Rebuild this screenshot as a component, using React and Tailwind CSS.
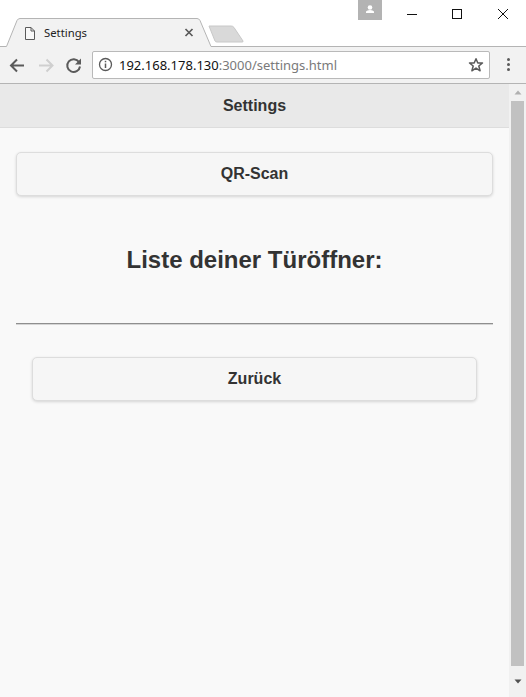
import React from "react";

function TabStrip() {
  return (
    <div className="relative h-[47px] bg-white shrink-0 overflow-hidden">
      <svg className="absolute left-0 top-0" width="526" height="47" viewBox="0 0 526 47" fill="none">
        <path d="M0 46.5H6.5L17 20.5Q18 18.5 20 18.5H197Q199 18.5 200 20.5L211 46.5H526V47H0Z" fill="#f2f2f2" />
        <path d="M0 46.5H6.5L17 20.5Q18 18.5 20 18.5H197Q199 18.5 200 20.5L211 46.5H526" stroke="#b4b4b4" strokeWidth="1" />
        <path d="M209 26H231Q233 26 234 27.5L243 41Q243.5 42 242 42H217Q215.5 42 215 41L209 26Z" fill="#d9d9d9" stroke="#c8c8c8" strokeWidth="1" />
        <path d="M25.5 27.5H31L34.5 31V39.5H25.5Z M31 27.5V31H34.5" stroke="#5a5a5a" strokeWidth="1" fill="#f8f8f8" />
        <path d="M185.5 29L192.5 36M192.5 29L185.5 36" stroke="#5a5a5a" strokeWidth="1.7" />
      </svg>
      <span className="absolute left-[44px] top-[24px] text-[11.3px] leading-[17px] text-[#222] font-['Noto_Sans',sans-serif]">Settings</span>
      <div className="absolute left-[358px] top-0 w-[24px] h-[20px] bg-[#b3b3b3]">
        <svg width="24" height="20" viewBox="0 0 24 20">
          <circle cx="12" cy="7.5" r="2.3" fill="#fff" />
          <path d="M8 13V11.5Q9 10 12 10Q15 10 16 11.5V13Z" fill="#fff" />
        </svg>
      </div>
      <svg className="absolute left-[400px] top-0" width="126" height="28" viewBox="0 0 126 28" fill="none" stroke="#111" strokeWidth="1">
        <path d="M7 14.5H17" />
        <rect x="52.5" y="9.5" width="9" height="9" />
        <path d="M98 9L108 19M108 9L98 19" />
      </svg>
    </div>
  );
}

function Toolbar() {
  return (
    <div className="h-[37px] shrink-0 bg-[#f2f2f2] border-b border-[#b4b4b4] flex items-center pb-[1px]">
      <div className="w-[92px] shrink-0 h-full relative">
        <svg width="92" height="36" viewBox="0 0 92 36" fill="none" strokeWidth="2">
          <path d="M24 18.5H11.5M17 12.5L11 18.5L17 24.5" stroke="#5a5a5a" />
          <path d="M39 18.5H52M46.5 12.5L52.5 18.5L46.5 24.5" stroke="#cfcfcf" />
          <path d="M79 15A6.4 6.4 0 1 0 80 19.5" stroke="#5a5a5a" />
          <path d="M81 11.5V17.5H75Z" fill="#5a5a5a" />
        </svg>
      </div>
      <div className="w-[398px] h-[28px] shrink-0 bg-white border border-[#b9b9b9] rounded-[2px] flex items-center">
        <svg className="ml-[5px] shrink-0" width="15" height="15" viewBox="0 0 15 15" fill="none">
          <circle cx="7.5" cy="7.5" r="6" stroke="#5a5a5a" strokeWidth="1.3" />
          <path d="M7.5 6.5V11" stroke="#5a5a5a" strokeWidth="1.5" />
          <path d="M7.5 3.8V5.3" stroke="#5a5a5a" strokeWidth="1.5" />
        </svg>
        <span className="ml-[6px] text-[13px] leading-[18px] whitespace-nowrap font-['Noto_Sans',sans-serif] text-[#111]">
          192.168.178.130<span className="text-[#7a7a7a]">:3000/settings.html</span>
        </span>
        <svg className="ml-auto mr-[5px] shrink-0" width="16" height="16" viewBox="0 0 16 16" fill="none">
          <path d="M8 1.8L9.8 6H14.5L10.8 9L12.1 13.8L8 11.1L3.9 13.8L5.2 9L1.5 6H6.2Z" stroke="#5a5a5a" strokeWidth="1.5" strokeLinejoin="round" />
        </svg>
      </div>
      <div className="flex-1 flex flex-col items-center gap-[2px]">
        <span className="w-[3px] h-[3px] rounded-full bg-[#5a5a5a]" />
        <span className="w-[3px] h-[3px] rounded-full bg-[#5a5a5a]" />
        <span className="w-[3px] h-[3px] rounded-full bg-[#5a5a5a]" />
      </div>
    </div>
  );
}

function Scrollbar() {
  return (
    <div className="w-[17px] shrink-0 bg-[#f1f1f1] flex flex-col items-center">
      <div className="h-[17px] w-full flex items-center justify-center shrink-0">
        <svg width="8" height="5" viewBox="0 0 8 5"><path d="M4 0.5L7.5 4.5H0.5Z" fill="#b0b0b0" /></svg>
      </div>
      <div className="w-[13px] flex-1 bg-[#c1c1c1]" />
      <div className="h-[31px] w-full flex items-center justify-center shrink-0">
        <svg width="8" height="5" viewBox="0 0 8 5"><path d="M4 4.5L7.5 0.5H0.5Z" fill="#505050" /></svg>
      </div>
    </div>
  );
}

function Btn({ children, className }) {
  return (
    <div className={"h-[44px] bg-[#f6f6f6] border border-[#dddddd] rounded-[5px] shadow-[0_1px_3px_rgba(0,0,0,0.15)] flex items-center justify-center text-[16px] font-bold text-[#333] " + (className || "")}>
      {children}
    </div>
  );
}

export default function App() {
  return (
    <div className="w-[526px] h-[697px] flex flex-col overflow-hidden bg-white font-['Liberation_Sans',sans-serif]">
      <TabStrip />
      <Toolbar />
      <div className="flex-1 min-h-0 flex">
        <div className="flex-1 bg-[#f9f9f9] flex flex-col min-w-0">
          <div className="h-[44px] shrink-0 bg-[#e9e9e9] border-b border-[#dddddd] flex items-center justify-center text-[16px] font-bold text-[#333]">
            Settings
          </div>
          <div className="px-[16px] pt-[24px]">
            <Btn>QR-Scan</Btn>
            <h2 className="mt-[50px] h-[28px] text-center text-[24px] leading-[28px] font-bold text-[#333]">Liste deiner Türöffner:</h2>
            <div className="mt-[49px] h-[1px] bg-[#8f8f8f] shadow-[0_1px_0_#d5d5d5]" />
            <div className="px-[16px] pt-[33px]">
              <Btn>Zurück</Btn>
            </div>
          </div>
        </div>
        <Scrollbar />
      </div>
    </div>
  );
}
